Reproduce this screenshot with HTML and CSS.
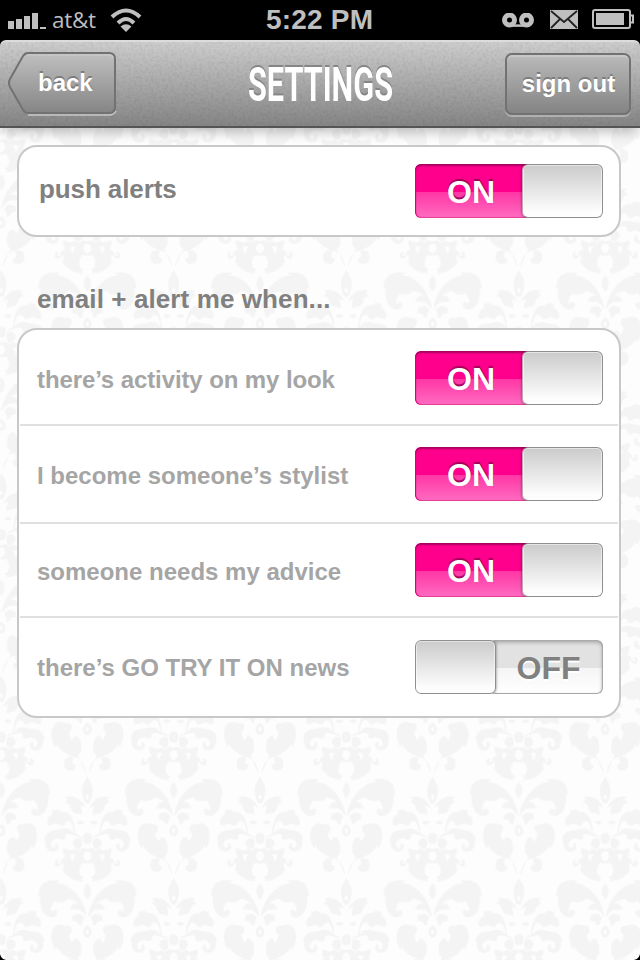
FILE: index.html
```html
<!DOCTYPE html>
<html lang="en">
<head>
<meta charset="utf-8">
<title>Settings</title>
<link rel="stylesheet" href="styles.css">
</head>
<body>
<svg class="damask" width="640" height="832" viewBox="0 128 640 832" aria-hidden="true">
  <defs>
    <g id="half">
      <path d="M0 0Q18 27 16 42Q14 68 5 80H0V68A5 7 0 0 0 0 54Z"/>
      <path d="M16 112C18 82 30 66 45 66Q58 64 68 78Q54 78 50 96Q44 112 30 110Q22 112 16 116Z"/>
      <path class="dots" d="M4 94Q14 76 28 66Q48 56 68 62"/>
      <path d="M36 170C38 130 52 100 78 106L88 98L106 102L104 112Q126 124 119 146Q106 148 94 140Q78 148 72 148Q60 124 48 140Q42 150 40 170Z"/>
      <path d="M8 138Q20 126 32 137Q22 151 8 138Z"/>
      <path class="line" d="M12 184Q40 164 62 170"/>
      <path d="M42 166Q68 156 92 166Q126 168 127 194Q128 222 106 225Q86 226 86 208Q88 196 98 202Q92 214 104 214Q116 202 102 190Q90 182 76 190Q62 190 66 177Q56 168 42 170Z"/>
      <path class="dots" d="M45 162Q65 150 88 160Q125 158 130 190"/>
      <path d="M0 168Q15 170 14 186Q12 204 0 202ZM18 186Q40 178 44 202Q34 220 22 216Q12 210 18 186Z"/>
      <path fill-rule="evenodd" d="M0 218Q13 210 26 222Q34 210 46 222L72 214Q76 230 66 240L82 252Q78 258 72 260Q76 288 50 302Q18 318 10 302Q26 300 24 276Q20 262 13 258Q8 262 0 260ZM0 224V254Q13 248 12 236Q8 224 0 224ZM34 234Q44 244 42 256Q54 246 50 232Z"/>
      <path d="M76 258Q82 256 88 262Q92 258 86 252Q90 246 96 252Q102 264 92 270Q80 270 76 258Z"/>
      <path class="dots" d="M78 274Q60 312 10 315"/>
      <path d="M0 320Q22 344 0 370Z"/>
      <path d="M2 424C8 365 55 316 98 320Q144 326 142 366Q142 416 108 423Q88 420 90 404Q98 394 108 406Q114 392 98 374Q72 384 58 366Q28 372 12 398Q6 406 2 424Z"/>
      <path class="dots" d="M82 312Q148 304 147 360"/>
      <path class="cut" d="M86 330Q126 326 133 360"/>
      <path d="M6 400Q18 374 42 382L54 398L24 400Q10 408 2 424ZM10 423Q20 404 44 417L46 432L30 436Q26 450 16 446Q18 434 10 426Z"/>
      <path fill-rule="evenodd" d="M0 446Q15 456 13 470Q9 484 0 483ZM0 458V474Q10 464 0 458Z"/>
      <path class="thick" d="M4 602Q8 554 44 548Q100 528 99 480Q94 450 66 454"/>
      <path d="M72 448Q42 442 48 466Q54 480 62 476Q68 468 60 462Q64 456 76 462ZM18 530C16 504 22 484 38 486L50 504Q48 520 38 524Q40 544 54 550Q26 552 18 530Z"/>
      <path class="line" d="M58 520Q52 494 70 490Q84 496 76 508L66 510"/>
      <path class="dots" d="M68 446Q106 436 108 480Q108 502 96 520"/>
      <path d="M40 554Q62 540 70 564Q72 590 50 590Q32 588 36 572Q44 574 46 562Z"/>
    </g>
    <g id="motif"><use href="#half"/><use href="#half" transform="scale(-1 1)"/></g>
    <pattern id="paper" x="87.4" y="776.6" width="172.6" height="202.6" patternUnits="userSpaceOnUse">
      <g class="ink" transform="scale(.3333)">
        <use href="#motif"/><use href="#motif" x="517.8"/>
        <use href="#motif" x="258.9" y="-304"/><use href="#motif" x="258.9" y="304"/>
      </g>
    </pattern>
  </defs>
  <rect y="128" width="640" height="832" fill="url(#paper)"/>
  <path d="M0 954Q1 959 6 960H0ZM640 954Q639 959 634 960H640Z"/>
</svg>

<div class="status">
  <svg class="signal" width="40" height="20" viewBox="0 0 40 20"><path d="M0 9H6V17H0ZM8 7H14V17H8ZM16 4H22V17H16ZM24 1H30V17H24ZM32 15H38V17H32Z"/></svg>
  <span class="carrier">at&amp;t</span>
  <svg class="wifi" width="32" height="24" viewBox="0 0 32 24"><path class="arc" d="M2 9Q16-4 30 9M8 15Q16 7 24 15"/><path d="M10.5 18.5Q16 14 21.5 18.5L16 24Z"/></svg>
  <span class="clock">5:22 PM</span>
  <svg class="voicemail" width="32" height="16" viewBox="0 0 32 16"><circle cx="7.5" cy="7" r="5"/><circle cx="24.5" cy="7" r="5"/><path d="M7 12.6H25"/></svg>
  <svg class="mail" width="28" height="20" viewBox="0 0 28 20"><path class="paper" d="M0 0H28V19H0Z"/><path class="fold" d="M1 1L14 12L27 1M1 18L10 9M27 18L18 9"/></svg>
  <svg class="battery" width="43" height="21" viewBox="0 0 43 21"><rect class="shell" x="1" y="1" width="37" height="18" rx="2"/><path d="M4 4H32V16H4Z"/><path class="shell" d="M38 6.5H41V13.5H38"/></svg>
</div>

<header class="bar">
  <svg class="grain" width="640" height="84"><filter id="noise"><feTurbulence type="fractalNoise" baseFrequency=".35" numOctaves="2" seed="4"/><feColorMatrix values="0 0 0 0 0  0 0 0 0 0  0 0 0 0 0  .9 0 0 0 -.36"/></filter><rect width="640" height="84" filter="url(#noise)"/></svg>
  <div class="back">
    <svg width="112" height="66" viewBox="0 0 112 66">
      <defs><linearGradient id="btn" x2="0" y2="1"><stop stop-color="#c0c0c0"/><stop offset="1" stop-color="#858585"/></linearGradient></defs>
      <path class="gleam" d="M20 63H101Q106 63 108 59"/>
      <path class="edge" fill="url(#btn)" d="M20 1H101Q107 1 107 7V55Q107 61 101 61H20Q17 61 15 58L2 35Q0 31 2 27L15 4Q17 1 20 1Z"/>
      <path class="gleam" d="M19 3H101Q104 3 105 6"/>
    </svg>
    <span>back</span>
  </div>
  <h1><svg width="150" height="54"><text x="3" y="41" textLength="145" lengthAdjust="spacingAndGlyphs">SETTINGS</text></svg></h1>
  <div class="signout">sign out</div>
</header>

<main>
  <section class="card single">
    <div class="row"><span class="strong">push alerts</span><div class="toggle on"><b>ON</b><i></i></div></div>
  </section>
  <h2>email + alert me when...</h2>
  <section class="card">
    <div class="row r1"><span class="tight">there’s activity on my look</span><div class="toggle on"><b>ON</b><i></i></div></div>
    <div class="row r2"><span>I become someone’s stylist</span><div class="toggle on"><b>ON</b><i></i></div></div>
    <div class="row r3"><span>someone needs my advice</span><div class="toggle on"><b>ON</b><i></i></div></div>
    <div class="row r4"><span>there’s GO TRY IT ON news</span><div class="toggle off"><i></i><b>OFF</b></div></div>
  </section>
</main>
</body>
</html>
```
FILE: styles.css
```css
* { box-sizing: border-box; }
body {
  position: relative;
  margin: 0;
  width: 640px;
  height: 960px;
  overflow: hidden;
  background: #fdfdfd;
  font-family: "Liberation Sans", Arial, sans-serif;
  font-weight: bold;
}
svg { display: block; flex: none; }

.damask { position: absolute; left: 0; top: 128px; }
.ink { fill: #f4f4f4; stroke: none; }
.ink .line { fill: none; stroke: #f4f4f4; stroke-width: 6; }
.ink .thick { fill: none; stroke: #f4f4f4; stroke-width: 11; }
.ink .dots { fill: none; stroke: #f4f4f4; stroke-width: 6; stroke-dasharray: 5 6; }
.ink .cut { fill: none; stroke: #fdfdfd; stroke-width: 4; }

.status {
  position: relative;
  display: flex;
  align-items: flex-start;
  height: 46px;
  margin-bottom: -6px;
  padding-left: 8px;
  background: #000;
  color: #bfbfbf;
  fill: #bfbfbf;
}
.signal { margin-top: 12px; }
.carrier {
  width: 59px;
  padding-left: 4px;
  font: 22.500px/40px "Open Sans", "Noto Sans", sans-serif;
  letter-spacing: -.3px;
}
.wifi { margin: 8px 0 0 3px; }
.arc { fill: none; stroke: #bfbfbf; stroke-width: 4; }
.clock {
  width: 112px;
  margin-left: 124px;
  font-size: 28px;
  line-height: 40px;
  letter-spacing: .2px;
  white-space: nowrap;
}
.voicemail { margin: 13px 0 0 124px; fill: none; stroke: #bfbfbf; stroke-width: 5; }
.voicemail path { stroke-width: 2.500px; }
.mail { margin: 10px 0 0 16px; }
.fold { fill: none; stroke: #222; stroke-width: 1.800px; }
.battery { margin: 9px 0 0 14px; }
.shell { fill: none; stroke: #bfbfbf; stroke-width: 2; }

.bar {
  position: relative;
  display: flex;
  justify-content: space-between;
  height: 88px;
  padding: 12px 9px 0 8px;
  border-top: 2px solid #dcdcdc;
  border-bottom: 2px solid #555;
  border-radius: 6px 6px 0 0;
  background: linear-gradient(#cdcdcd, #858585);
  box-shadow: 0 8px 12px -4px rgba(0, 0, 0, .25);
  color: #fff;
}
.grain { position: absolute; left: 0; top: 0; opacity: .16; }
.back { position: relative; width: 112px; margin-top: -2px; }
.back span {
  position: absolute;
  left: 30px;
  top: 16px;
  font-size: 24px;
  line-height: 30px;
  text-shadow: 0 -2px 0 #7c7c7c;
}
.edge { stroke: #727272; stroke-width: 2; }
.gleam { fill: none; stroke: #c8c8c8; stroke-width: 1.500px; }
h1 { position: relative; margin: 6px 0 0; transform: translateX(7px); }
h1 text {
  font: bold 48px Roboto, sans-serif;
  fill: #fff;
  filter: drop-shadow(0 -2px 0 #858585);
}
.signout {
  position: relative;
  width: 126px;
  height: 62px;
  margin-top: -1px;
  padding-left: 1px;
  border: 2px solid #727272;
  border-radius: 7px;
  background: linear-gradient(#bababa, #848484);
  box-shadow: inset 0 2px 0 #c8c8c8, 0 2px 0 #b0b0b0;
  font-size: 24px;
  line-height: 57px;
  text-align: center;
  text-shadow: 0 -2px 0 #7c7c7c;
}

main { position: relative; padding: 17px 19px 0 17px; }
.card {
  border: 2px solid #c8c8c8;
  border-radius: 20px;
  background: #fff;
}
.row {
  display: flex;
  justify-content: space-between;
  margin: 0 1px;
  padding: 0 15px 0 17px;
  color: #a5a5a5;
  font-size: 24px;
  line-height: 57px;
}
.row .tight { letter-spacing: -.1px; }
.row .strong {
  padding-left: 2px;
  color: #808080;
  font-size: 26px;
  line-height: 50px;
  letter-spacing: -.1px;
}
.single .row { height: 88px; padding-top: 17px; }
h2 {
  margin: 44px 0 0 20px;
  color: #808080;
  font-size: 26px;
  line-height: 36px;
  letter-spacing: .1px;
}
h2 + .card { margin-top: 11px; }
.r1 { height: 96px; padding-top: 21px; }
.r2 { height: 98px; padding-top: 21px; }
.r3 { height: 94px; padding-top: 19px; }
.r4 { height: 98px; padding-top: 22px; line-height: 55px; }
.r1, .r2, .r3 { border-bottom: 2px solid #e0e0e0; }

.toggle {
  display: flex;
  width: 188px;
  height: 54px;
  overflow: hidden;
  border-radius: 6px;
  font-size: 32px;
  line-height: 57px;
  text-align: center;
}
.toggle i {
  width: 81px;
  border: 1px solid #8e8e8e;
  border-radius: 6px;
  background: linear-gradient(#cbcbcb, #fdfdfd 90%);
  box-shadow: inset 0 0 0 1px rgba(255, 255, 255, .5), 0 0 3px rgba(0, 0, 0, .5);
}
.on i { border-left-color: #c9a0b6; }
.toggle b { flex: 1; }
.on {
  background: linear-gradient(to right, #ff2fa0 150px, #e4e4e4 150px);
}
.on b {
  margin-right: -6px;
  padding-right: 1px;
  border-radius: 6px 0 0 6px;
  background: linear-gradient(#ff008c 28px, #ff36a6 28px, #ff6cc0);
  box-shadow: inset 0 2px 2px #a80060, inset 1px 0 1px #e0007c, inset 0 -1px 1px #e8489e;
  color: #fff;
  text-shadow: 0 -2px 1px #a00057;
}
.on i { width: 81px; }
.off { background: #fff; }
.off b {
  margin-left: -6px;
  padding-left: 4px;
  border-radius: 6px;
  background: linear-gradient(#e2e2e2 28px, #f5f5f5 28px, #fff);
  box-shadow: inset 0 2px 4px #999, inset -1px 0 1px #aaa, inset 0 -1px 0 #aaa;
  color: #808080;
  text-shadow: 0 2px 0 #fff;
}
.toggle i { position: relative; }
```
